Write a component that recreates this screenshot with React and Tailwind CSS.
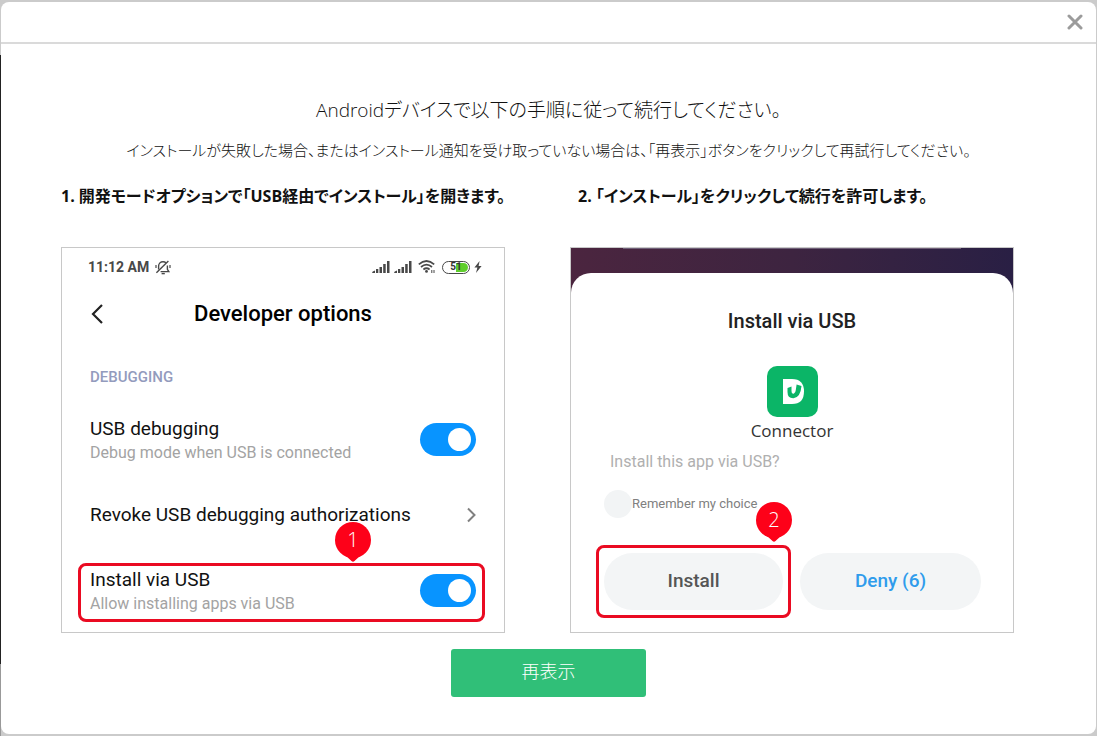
import React, { useState } from "react";
import clsx from "clsx";

function Toggle({ id, checked, onChange }) {
  return (
    <input
      id={id}
      type="checkbox"
      checked={checked}
      onChange={onChange}
      className="mb-1 h-[33px] w-14 shrink-0 cursor-pointer appearance-none rounded-full bg-gray-300 before:mt-[5px] before:ml-[5px] before:block before:size-[23px] before:rounded-full before:bg-white checked:bg-[#0894ff] checked:before:ml-7"
    />
  );
}

function Pin({ number, className }) {
  return (
    <div className={clsx("absolute bottom-full flex flex-col items-center", className)}>
      <div className="flex size-9 items-center justify-center rounded-full bg-[#fd0119] font-['Open_Sans',sans-serif] text-xl font-light text-white">
        {number}
      </div>
      <svg className="-mt-1 block" width="16" height="8" viewBox="0 0 16 8" fill="#fd0119">
        <path d="M0 1 L16 1 L9.5 7 Q8 8.4 6.5 7 Z" />
      </svg>
    </div>
  );
}

function Signal() {
  return (
    <svg width="18" height="12" viewBox="0 0 18 12" fill="#484848">
      <path d="M0 12 Q0 10 3 9.4 V12 Z" />
      <rect x="4" y="8" width="2.3" height="4" />
      <rect x="7.5" y="6" width="2.5" height="6" />
      <rect x="11.2" y="3" width="2.5" height="9" />
      <rect x="15" y="0" width="2.5" height="12" />
    </svg>
  );
}

function StatusBar() {
  return (
    <div className="flex h-[38px] items-center pr-[22px] pl-[26px] text-[#484848]">
      <span className="text-sm font-bold">11:12 AM</span>
      <svg className="ml-1.5" width="16" height="15" viewBox="0 0 16 15" fill="none" stroke="#484848" strokeWidth="1.4">
        <path d="M3.6 9.4 V6.2 A4.4 4.4 0 0 1 8 1.8 Q9.8 1.8 11 2.8" />
        <path d="M12.4 5.4 V9.4 L13.8 11.6 H5.6" />
        <path d="M1.4 12.8 L13.4 1" />
        <path d="M6.6 13.6 H9.8" />
        <path d="M1 5 V8 M15 5 V8" strokeWidth="1.2" />
      </svg>
      <div className="ml-auto flex items-center">
        <Signal />
        <span className="ml-1">
          <Signal />
        </span>
        <svg className="ml-1.5" width="18" height="14" viewBox="0 0 18 14" fill="none" stroke="#484848" strokeWidth="1.7">
          <path d="M0.8 4.4 Q8.5 -2.4 16.2 4.4" />
          <path d="M3 7 Q8.5 2.3 14 7" />
          <path d="M5.4 9.5 Q8.5 7 11.6 9.5" />
          <circle cx="8.5" cy="11.4" r="1.4" fill="#484848" stroke="none" />
          <path d="M13.8 10 V13 M16 10 V13" strokeWidth="1" />
        </svg>
        <div className="ml-1.5 flex h-[13px] w-7 rounded-full border border-[#484848] p-px">
          <div className="flex w-full items-center justify-center rounded-full bg-linear-to-r from-white from-50% to-[#5fce2c] to-50% text-[10px] leading-none font-bold text-[#333]">
            51
          </div>
        </div>
        <svg className="ml-1" width="8" height="12" viewBox="0 0 8 12" fill="#484848">
          <path d="M5.6 0 L0.4 6.6 H3.4 L2 12 L7.6 5 H4.6 Z" />
        </svg>
      </div>
    </div>
  );
}

function DeveloperOptions() {
  const [debugging, setDebugging] = useState(true);
  const [install, setInstall] = useState(true);

  return (
    <div className="border border-[#c8c8c8] bg-white pb-2.5 font-['Roboto',sans-serif]">
      <StatusBar />
      <div className="grid h-14 grid-cols-[1fr_auto_1fr] items-center px-7">
        <button aria-label="Back" className="w-4 cursor-pointer">
          <svg width="14" height="20" viewBox="0 0 14 20" fill="none" stroke="#222" strokeWidth="2.2">
            <path d="M12 1 L3 10 L12 19" />
          </svg>
        </button>
        <h3 className="text-[22px] leading-6 font-medium text-black">Developer options</h3>
      </div>

      <p className="mt-[23px] px-7 text-[15px] leading-6 font-medium text-[#939bbd]">DEBUGGING</p>

      <div className="mt-7 flex items-center justify-between px-7">
        <label htmlFor="usb-debugging">
          <span className="block text-[19px] leading-6 text-[#111]">USB debugging</span>
          <span className="block text-base leading-6 text-[#a3a3a3]">Debug mode when USB is connected</span>
        </label>
        <Toggle id="usb-debugging" checked={debugging} onChange={() => setDebugging(!debugging)} />
      </div>

      <button className="mt-[38px] flex w-full cursor-pointer items-center justify-between px-7 text-[19px] leading-6 text-[#111]">
        Revoke USB debugging authorizations
        <svg width="9" height="16" viewBox="0 0 9 16" fill="none" stroke="#808080" strokeWidth="2">
          <path d="M1 1.5 L7.5 8 L1 14.5" />
        </svg>
      </button>

      <div className="relative mt-9 mr-[19px] ml-4 flex items-center justify-between rounded-lg border-3 border-[#ea0b22] pt-0.5 pr-1.5 pb-[3px] pl-[9px]">
        <label htmlFor="install-usb">
          <span className="block text-[19px] leading-6 text-[#111]">Install via USB</span>
          <span className="block text-base leading-6 text-[#a3a3a3]">Allow installing apps via USB</span>
        </label>
        <Toggle id="install-usb" checked={install} onChange={() => setInstall(!install)} />
        <Pin number={1} className="left-[254px] mb-1" />
      </div>
    </div>
  );
}

function InstallPrompt() {
  return (
    <div className="border border-[#c8c8c8] bg-linear-to-r from-[#4b253f] via-[#3d2440] to-[#291f44] font-['Roboto',sans-serif]">
      <div className="mx-[52px] h-px bg-[#6f5f78]" />
      <div className="mt-6 rounded-t-[20px] bg-white pt-9 pb-3.5">
        <h3 className="text-center text-xl leading-6 font-medium text-[#222]">Install via USB</h3>
        <svg className="mx-auto mt-[33px] block" width="51" height="51" viewBox="0 0 51 51">
          <rect width="51" height="51" rx="10" fill="#0bb567" />
          <path d="M16 13 H25 Q37 13 37 25.5 Q37 38 25 38 H16 Z" fill="#fff" />
          <path
            d="M20.5 22 L24.5 20.5 V25 Q24.5 28.5 27 27.5 Q28.5 27 28.8 24 L29.6 18.5 L34.5 20 Q33.5 31.5 26.5 32.2 Q20.5 32.4 20.5 26 Z"
            fill="#0bb567"
          />
        </svg>
        <p className="mt-0.5 text-center font-['Open_Sans',sans-serif] text-[17px] leading-6 text-[#333]">Connector</p>

        <p className="mt-[7px] pl-[39px] text-base leading-6 text-[#b0b0b0]">Install this app via USB?</p>
        <div className="mt-4 flex items-center pl-[33px]">
          <input
            id="remember"
            type="checkbox"
            className="size-7 cursor-pointer appearance-none rounded-full bg-[#f2f4f5] checked:bg-[#0894ff]"
          />
          <label htmlFor="remember" className="text-[13px] text-[#808080]">
            Remember my choice
          </label>
        </div>

        <div className="mt-[27px] flex items-center gap-[9px] pr-8 pl-[25px]">
          <div className="relative w-[195px] rounded-lg border-3 border-[#ea0b22] p-[5px]">
            <button className="h-[57px] w-full cursor-pointer rounded-full bg-[#f3f5f6] text-[19px] font-medium text-[#555]">
              Install
            </button>
            <Pin number={2} className="left-[157px] mb-1.5" />
          </div>
          <button className="h-[57px] flex-1 cursor-pointer rounded-full bg-[#f3f5f6] text-[19px] font-medium text-[#2f9cec]">
            Deny (6)
          </button>
        </div>
      </div>
    </div>
  );
}

function App() {
  return (
    <div className="flex min-h-screen bg-[#cbcbcb] font-['Open_Sans','Noto_Sans_CJK_JP',sans-serif] text-[#111] [font-feature-settings:'palt']">
      {/* Edge of the window behind the dialog */}
      <div className="flex w-px flex-col">
        <div className="h-[55px]" />
        <div className="flex-1 bg-[#222]" />
        <div className="h-[72px] bg-[#999]" />
      </div>

      <div role="dialog" lang="ja" className="mt-0.5 mr-px mb-0.5 flex flex-1 flex-col rounded-lg bg-white">
        <div className="flex h-[42px] items-center justify-end border-b-2 border-[#dadada] pr-[13px]">
          <button aria-label="閉じる" className="cursor-pointer">
            <svg width="16" height="16" viewBox="0 0 16 16" fill="none" stroke="#9b9b9b" strokeWidth="3" strokeLinecap="round">
              <path d="M2 2 L14 14 M14 2 L2 14" />
            </svg>
          </button>
        </div>

        <h1 className="mt-[52px] text-center text-[19px] leading-7 font-light">
          Androidデバイスで以下の手順に従って続行してください。
        </h1>
        <p className="mt-3.5 text-center text-[15px] leading-6 font-light">
          インストールが失敗した場合、またはインストール通知を受け取っていない場合は、「再表示」ボタンをクリックして再試行してください。
        </p>

        <div className="mt-[22px] grid grid-cols-2 gap-[65px] pr-[82px] pl-[60px]">
          <section>
            <h2 className="mb-[39px] text-base leading-6 font-bold whitespace-nowrap">
              1. 開発モードオプションで「USB経由でインストール」を開きます。
            </h2>
            <DeveloperOptions />
          </section>
          <section>
            <h2 className="mb-[39px] pl-2 text-base leading-6 font-bold whitespace-nowrap">
              2. 「インストール」をクリックして続行を許可します。
            </h2>
            <InstallPrompt />
          </section>
        </div>

        <button className="mx-auto mt-4 h-12 w-[195px] cursor-pointer rounded-[3px] bg-[#30bf78] pb-1 text-lg font-light text-white">
          再表示
        </button>
      </div>
    </div>
  );
}

export default App;
